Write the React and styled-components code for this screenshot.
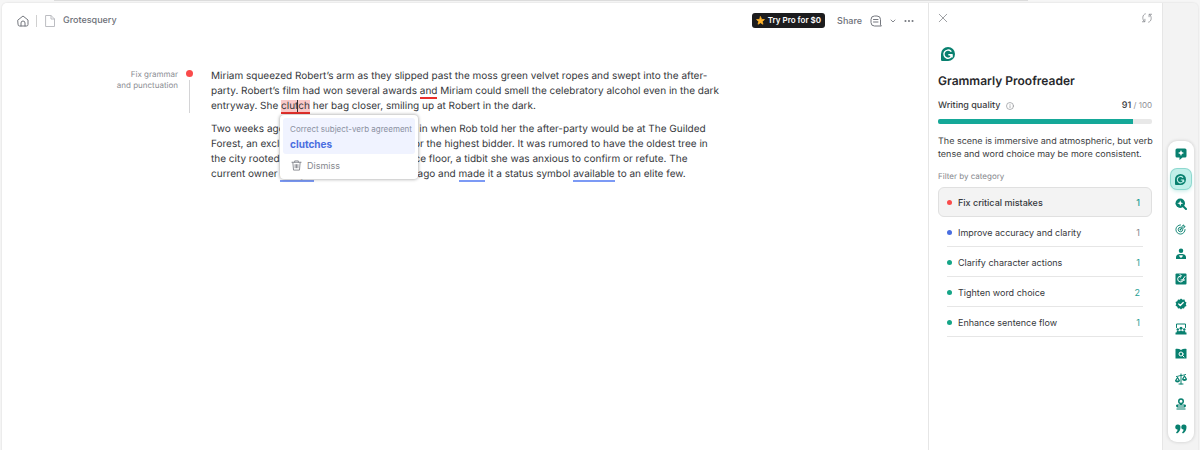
import React from "react";
import styled, { createGlobalStyle, css } from "styled-components";

const GlobalStyle = createGlobalStyle`
  *, *::before, *::after { box-sizing: border-box; }
  body { margin: 0; background: #f6f6f6; color: #3a3c40; font: 10px/15px Inter, "Liberation Sans", sans-serif; text-rendering: geometricPrecision; }
  button { font: inherit; color: inherit; background: none; border: 0; padding: 0; margin: 0; cursor: pointer; }
  p, h1, h2, ul { margin: 0; padding: 0; }
  ul { list-style: none; }
  svg { display: block; }
`;

const Page = styled.div`
  min-height: 100vh;
  display: flex;
  flex-direction: column;
  padding: 0 2px;
`;
const TopEdge = styled.div`
  height: 1px;
  margin: 0 170px 2px 52px;
  background: #dcdcdc;
`;
const Shell = styled.div`
  flex: 1;
  display: flex;
  background: #f3f3f3;
  border-radius: 5px 5px 0 0;
  box-shadow: 0 0 1px 1px #ececec;
`;
const Editor = styled.main`
  flex: 1;
  min-width: 0;
  background: #fff;
  border-radius: 5px 0 0 0;
`;
const Header = styled.header`
  display: flex;
  align-items: center;
  justify-content: space-between;
  height: 35px;
  padding: 0 14px 0 15px;
  color: #6d7078;
  font-size: 9px;
  font-weight: 500;
`;
const HeaderGroup = styled.div`
  display: flex;
  align-items: center;
  gap: ${(p) => p.$gap}px;
`;
const IconButton = styled.button`
  display: flex;
  align-items: center;
  justify-content: center;
  color: ${(p) => p.$color || "#74777e"};
`;
const ShareButton = styled.button`
  margin-left: 4px;
`;
const Divider = styled.span`
  width: 1px;
  height: 12px;
  background: #d0d0d0;
`;
const FileName = styled.h1`
  font-size: 9px;
  font-weight: 500;
`;
const ProButton = styled.button`
  display: flex;
  align-items: center;
  gap: 3px;
  height: 15px;
  padding: 0 4px;
  border-radius: 3px;
  background: #1c1c1e;
  color: #fff;
  font-size: 8px;
  font-weight: 600;
`;

const Document = styled.div`
  display: grid;
  grid-template-columns: minmax(0, 1fr) 500px minmax(0, 1fr);
  padding: 31px 8px 0 0;
`;
const MarginNote = styled.aside`
  display: flex;
  justify-content: flex-end;
  gap: 8px;
  padding-right: 18px;
  color: #8b8d93;
  font-size: 8px;
  line-height: 11px;
  text-align: right;
`;
const Marker = styled.span`
  display: flex;
  flex-direction: column;
  align-items: center;
  gap: 3px;
  width: 7px;
  height: 44px;
  padding-top: 1px;
  &::before { content: ""; width: 7px; height: 7px; border-radius: 50%; background: #fa4b4b; }
  &::after { content: ""; flex: 1; width: 1px; background: #d4d4d6; }
`;
const Prose = styled.article`
  display: flex;
  flex-direction: column;
  gap: 8px;
  white-space: nowrap;
  color: #36383c;
`;
const Mark = styled.span`
  position: relative;
  border-bottom: 2px solid ${(p) => (p.$tone === "red" ? "#e8302c" : "#7c9af5")};
  background: ${(p) => (p.$active ? "#f9c9c9" : "transparent")};
`;
const Caret = styled.span`
  position: absolute;
  left: 16px;
  top: 0;
  width: 1px;
  height: 12px;
  background: #333;
`;
const Popup = styled.div`
  position: absolute;
  z-index: 2;
  top: 15px;
  left: -1px;
  width: 138px;
  padding: 3px;
  border-radius: 4px;
  background: #fff;
  box-shadow: 0 0 3px 1px rgba(0, 0, 0, 0.25);
`;
const Suggestion = styled.button`
  display: flex;
  flex-direction: column;
  width: 100%;
  height: 36px;
  padding: 4px 0 0 7px;
  border-radius: 3px;
  background: #f0f3ff;
  color: #8a909f;
  font-size: 8px;
  line-height: 15px;
  text-align: left;
  strong { color: #4a6ee0; font-size: 10px; line-height: 15px; font-weight: 700; }
`;
const Dismiss = styled.button`
  display: flex;
  align-items: center;
  gap: 5px;
  height: 22px;
  padding: 0 8px;
  color: #85888e;
  font-size: 9px;
`;

const Panel = styled.aside`
  display: flex;
  flex-direction: column;
  width: 235px;
  padding: 0 10px 0 9px;
  background: #fff;
  border-left: 1px solid #e6e6e6;
  border-right: 1px solid #e6e6e6;
`;
const PanelTop = styled.div`
  display: flex;
  align-items: center;
  justify-content: space-between;
  height: 30px;
`;
const Brand = styled.div`
  display: flex;
  padding: 14px 0 0 3px;
  color: #08806f;
`;
const Title = styled.h2`
  margin-top: 11px;
  font-size: 12px;
  line-height: 18px;
  font-weight: 600;
  color: #27282b;
`;
const Quality = styled.div`
  display: flex;
  align-items: center;
  gap: 6px;
  height: 15px;
  margin-top: 8px;
  font-size: 9px;
  font-weight: 500;
`;
const Score = styled.span`
  margin-left: auto;
  color: #8b8d93;
  font-size: 8px;
  font-weight: 400;
  strong { color: #36383c; font-size: 9px; font-weight: 500; }
`;
const Track = styled.div`
  height: 5px;
  margin-top: 6px;
  border-radius: 2px;
  background: #e8e8e8;
  overflow: hidden;
`;
const Fill = styled.div`
  height: 100%;
  background: #15a898;
`;
const Summary = styled.p`
  margin-top: 11px;
  font-size: 9px;
  line-height: 13px;
  white-space: nowrap;
`;
const FilterLabel = styled.p`
  margin-top: 9px;
  color: #85878c;
  font-size: 8px;
  line-height: 13px;
`;
const Filters = styled.ul`
  margin-top: 4px;
`;
const Filter = styled.button`
  display: flex;
  width: 100%;
  height: 30px;
  padding: 0 8px;
  border: 1px solid ${(p) => (p.$selected ? "#e0e0e0" : "transparent")};
  border-radius: 6px;
  background: ${(p) => (p.$selected ? "#f3f3f3" : "transparent")};
  color: #36383c;
  font-size: 9px;
  font-weight: ${(p) => (p.$selected ? 500 : 400)};
`;
const FilterLine = styled.span`
  flex: 1;
  display: flex;
  align-items: center;
  gap: 6px;
  height: 29px;
  padding-right: 3px;
  border-bottom: 1px solid ${(p) => (p.$selected ? "transparent" : "#e6e6e6")};
`;
const Dot = styled.span`
  width: 5px;
  height: 5px;
  border-radius: 50%;
  background: ${(p) => p.$color};
`;
const Count = styled.span`
  margin-left: auto;
  color: ${(p) => p.$color};
`;

const Rail = styled.aside`
  display: flex;
  align-items: flex-end;
  justify-content: center;
  width: 35px;
  padding-bottom: 8px;
`;
const Tools = styled.nav`
  display: flex;
  flex-direction: column;
  align-items: center;
  gap: 5px;
  width: 26px;
  padding: 3px 0;
  border-radius: 9px;
  background: #fff;
  box-shadow: 0 0 3px 1px rgba(0, 0, 0, 0.1);
`;
const Tool = styled.button`
  display: flex;
  align-items: center;
  justify-content: center;
  width: 20px;
  height: 20px;
  border-radius: 6px;
  color: #08806f;
  ${(p) => p.$active && css`
    background: #c0efe9;
    box-shadow: 0 0 0 1px #8ed8cf, 0 2px 4px #bfe9e4;
  `}
`;

const Svg = ({ size = 12, children, ...rest }) => (
  <svg width={size} height={size} viewBox="0 0 24 24" fill="none" stroke="currentColor" strokeWidth="2" strokeLinecap="round" strokeLinejoin="round" aria-hidden="true" {...rest}>
    {children}
  </svg>
);
const solid = { fill: "currentColor", stroke: "none" };
const white = { stroke: "#fff", fill: "none" };

const GLogo = ({ size, inner = "#fff" }) => (
  <Svg size={size}>
    <path {...solid} d="M12 0a12 12 0 1 1 0 24H2a2 2 0 0 1-2-2V12A12 12 0 0 1 12 0z" />
    <path stroke={inner} strokeWidth="2.400" d="M17 7.300A7 7 0 1 0 19 13.200H13.500M19 13.200l-2.200 2.300M19 13.200V17" />
  </Svg>
);

const tools = [
  ["Add comment", <Svg key="i"><path {...solid} d="M4 1h16a3 3 0 0 1 3 3v12a3 3 0 0 1-3 3h-5l-6 5v-5H4a3 3 0 0 1-3-3V4a3 3 0 0 1 3-3z" /><path {...solid} fill="#fff" d="M12 4l1.800 4.200L18 10l-4.200 1.800L12 16l-1.800-4.200L6 10l4.200-1.800z" /></Svg>],
  ["Proofreader", <GLogo key="i" size={11} inner="#c0efe9" />],
  ["Search", <Svg key="i"><circle {...solid} cx="10.500" cy="10.500" r="9.500" /><path strokeWidth="4" d="M17 17l5 5" /><path {...solid} fill="#fff" d="M10.500 4.500l1.600 4.400 4.400 1.600-4.400 1.600-1.600 4.400-1.600-4.400L4.500 10.500l4.400-1.600z" /></Svg>],
  ["Goals", <Svg key="i" size={11}><path d="M12 2a10 10 0 1 0 10 10M12 7a5 5 0 1 0 5 5M12 12l3-3V5l4-3v3h3l-3 4h-4" /><circle {...solid} cx="12" cy="12" r="2" /></Svg>],
  ["Reader reactions", <Svg key="i"><circle {...solid} cx="12" cy="5.500" r="4.500" /><path {...solid} d="M2 22v-4c0-4 4-6 10-6s10 2 10 6v4z" /><path {...solid} fill="#fff" d="M12 20l-3.500-3.300c-1-2 2-3.500 3.500-1.500 1.500-2 4.500-.5 3.500 1.500z" /></Svg>],
  ["Paraphraser", <Svg key="i"><rect {...solid} x="1" y="1" width="22" height="22" rx="2" /><path {...white} d="M11 6a6 6 0 1 0 6 8M10 3l3 3-3 3M12 14h3l5-7M16 14h3" /></Svg>],
  ["Fact checker", <Svg key="i"><path {...solid} d="M12 1l3 2.500 4-.5 1 4 3 2-1.500 3.500L23 16l-3.500 1.500L18 21l-3.500-.5L12 23l-2.500-2.500L6 21l-1.500-3.500L1 15l1.500-3L1 8l3.500-1.500L6 3l3.500.5z" /><path {...white} strokeWidth="2.500" d="M7.500 12l3 3 6-6" /></Svg>],
  ["Audience", <Svg key="i"><path d="M3 9V2h18v7" /><circle {...solid} cx="12" cy="10.500" r="3" /><circle {...solid} cx="5.500" cy="13" r="2.500" /><circle {...solid} cx="18.500" cy="13" r="2.500" /><path {...solid} d="M3 19c0-4 4-4 5-2 2-3 6-3 8 0 1-2 5-2 5 2h2v4H1v-4z" /></Svg>],
  ["Citation finder", <Svg key="i"><path {...solid} d="M1 2c4-1 8 0 11 2 3-2 7-3 11-2v19H1z" /><circle {...white} cx="12" cy="12" r="4" /><path {...white} d="M15 15l3 3" /></Svg>],
  ["Plagiarism check", <Svg key="i"><path d="M12 2v20M8 22h8M3 7c4 0 5-2 9-2s5-1 9-2" /><path {...solid} d="M5 7l5 8c0 5-10 5-10 0zM19 4l5 8c0 5-10 5-10 0z" /><path {...solid} fill="#fff" d="M5 11l2 4H3zM19 8l2 4h-4z" /></Svg>],
  ["Authorship", <Svg key="i"><circle strokeWidth="3" cx="12" cy="6.500" r="4.500" /><path {...solid} d="M10 10h4v3h5c4 0 4 5 0 6H5c-4-1-4-6 0-6h5zM3 21h18v2H3z" /><path {...white} d="M7 16h10" /></Svg>],
  ["Quotes", <Svg key="i"><path {...solid} d="M6 3a5 5 0 0 1 5 5c0 6-2 10-7 13l-2-2c2-2 3-3 3-6a5 5 0 0 1 1-10zM18 3a5 5 0 0 1 5 5c0 6-2 10-7 13l-2-2c2-2 3-3 3-6a5 5 0 0 1 1-10z" /></Svg>],
];

const filters = [
  { label: "Fix critical mistakes", count: 1, dot: "#fa4b4b", color: "#25a093", selected: true },
  { label: "Improve accuracy and clarity", count: 1, dot: "#4a6ee0", color: "#85878c" },
  { label: "Clarify character actions", count: 1, dot: "#15a587", color: "#25a093" },
  { label: "Tighten word choice", count: 2, dot: "#15a587", color: "#25a093" },
  { label: "Enhance sentence flow", count: 1, dot: "#15a587", color: "#25a093" },
];

export default function App() {
  const score = 91;
  return (
    <Page>
      <GlobalStyle />
      <TopEdge />
      <Shell>
        <Editor>
          <Header>
            <HeaderGroup $gap={7}>
              <IconButton aria-label="Home"><Svg><path d="M2 10l10-8 10 8v9a3 3 0 0 1-3 3H5a3 3 0 0 1-3-3zM8 22v-6a4 4 0 0 1 8 0v6" /></Svg></IconButton>
              <Divider />
              <IconButton as="span" $color="#bcbdc2"><Svg><path d="M4 1h10l7 7v15H4zM14 1v7h7" /></Svg></IconButton>
              <FileName>Grotesquery</FileName>
            </HeaderGroup>
            <HeaderGroup $gap={8}>
              <ProButton>
                <Svg size={9} fill="#ffb32c" stroke="#ffb32c"><path d="M12 2l3 7 7.500.6-5.700 5 1.800 7.400-6.600-4-6.600 4 1.800-7.400-5.700-5L9 9z" /></Svg>
                Try Pro for $0
              </ProButton>
              <ShareButton>Share</ShareButton>
              <IconButton aria-label="Comments"><Svg><path d="M22 22H9a7 7 0 0 1-7-7V9a7 7 0 0 1 7-7h5a7 7 0 0 1 7 7v10zM7 9h9M7 14h9" /></Svg></IconButton>
              <IconButton aria-label="Comment options"><Svg size={6}><path strokeWidth="3.500" d="M4 8l8 8 8-8" /></Svg></IconButton>
              <IconButton aria-label="More"><Svg size={10} {...solid}><circle cx="3.500" cy="12" r="2.500" /><circle cx="12" cy="12" r="2.500" /><circle cx="20.500" cy="12" r="2.500" /></Svg></IconButton>
            </HeaderGroup>
          </Header>
          <Document>
            <MarginNote>
              <p>Fix grammar<br />and punctuation</p>
              <Marker />
            </MarginNote>
            <Prose>
              <p>
                Miriam squeezed Robert’s arm as they slipped past the moss green velvet ropes and swept into the after-<br />
                party. Robert’s film had won several awards <Mark $tone="red">and</Mark> Miriam could smell the celebratory alcohol even in the dark<br />
                entryway. She{" "}
                <Mark $tone="red" $active>
                  clutch<Caret />
                  <Popup role="dialog" aria-label="Suggestion">
                    <Suggestion>Correct subject-verb agreement<strong>clutches</strong></Suggestion>
                    <Dismiss>
                      <Svg size={11}><path d="M2 5h20M8 5V2h8v3M4 5l1.500 17h13L20 5M9 10v7M15 10v7M12 10v7" /></Svg>
                      Dismiss
                    </Dismiss>
                  </Popup>
                </Mark>{" "}
                her bag closer, smiling up at Robert in the dark.
              </p>
              <p>
                Two weeks ago, Miriam had nearly stepped in when Rob told her the after-party would be at The Guilded<br />
                Forest, an exclusive venue often reserved for the highest bidder. It was rumored to have the oldest tree in<br />
                the city rooted straight through its own dance floor, a tidbit she was anxious to confirm or refute. The<br />
                current owner <Mark>bought</Mark> it some twenty years ago and <Mark>made</Mark> it a status symbol <Mark>available</Mark> to an elite few.
              </p>
            </Prose>
          </Document>
        </Editor>
        <Panel>
          <PanelTop>
            <IconButton aria-label="Close" $color="#8c8e93"><Svg size={10}><path d="M3 3l18 18M21 3L3 21" /></Svg></IconButton>
            <IconButton aria-label="Refresh" $color="#8c8e93"><Svg size={10}><path d="M8 2C0 4 0 16 6 21M1 21h6v-6M16 22c8-2 8-14 2-19M23 3h-6v6" /></Svg></IconButton>
          </PanelTop>
          <Brand><GLogo size={14} /></Brand>
          <Title>Grammarly Proofreader</Title>
          <Quality>
            Writing quality
            <IconButton aria-label="About writing quality" $color="#8c8e93"><Svg size={8}><circle cx="12" cy="12" r="10.500" /><path d="M12 11v6M12 7v.1" /></Svg></IconButton>
            <Score><strong>{score}</strong> / 100</Score>
          </Quality>
          <Track role="progressbar" aria-label="Writing quality" aria-valuenow={score}><Fill style={{ width: `${score}%` }} /></Track>
          <Summary>The scene is immersive and atmospheric, but verb<br />tense and word choice may be more consistent.</Summary>
          <FilterLabel>Filter by category</FilterLabel>
          <Filters>
            {filters.map((f) => (
              <li key={f.label}>
                <Filter $selected={f.selected} aria-pressed={!!f.selected}>
                  <FilterLine $selected={f.selected}>
                    <Dot $color={f.dot} />
                    {f.label}
                    <Count $color={f.color}>{f.count}</Count>
                  </FilterLine>
                </Filter>
              </li>
            ))}
          </Filters>
        </Panel>
        <Rail>
          <Tools aria-label="Writing tools">
            {tools.map(([label, icon]) => (
              <Tool key={label} aria-label={label} $active={label === "Proofreader"}>{icon}</Tool>
            ))}
          </Tools>
        </Rail>
      </Shell>
    </Page>
  );
}
